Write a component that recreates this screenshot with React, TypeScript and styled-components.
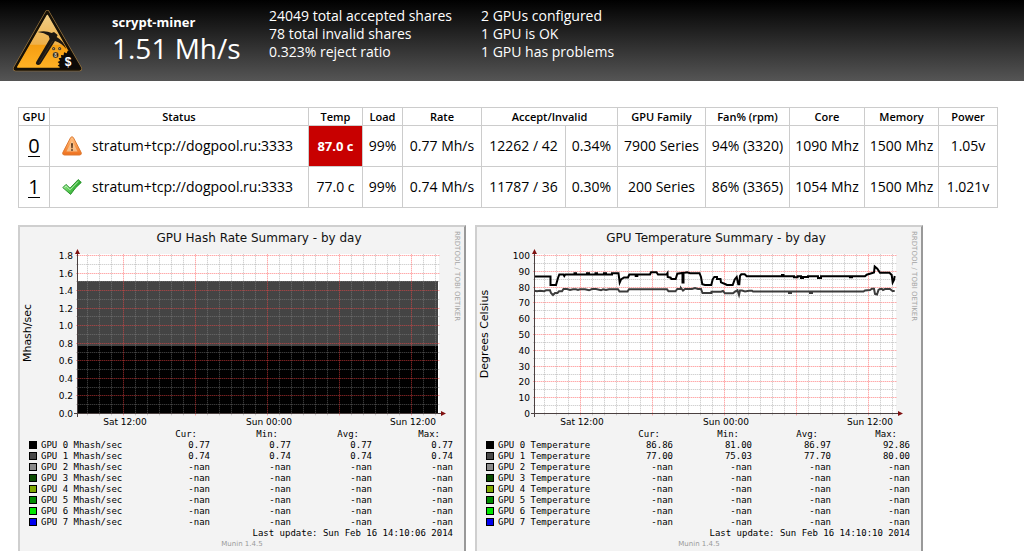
import React from "react";
import styled, { createGlobalStyle } from "styled-components";

const GlobalStyle = createGlobalStyle`
  html { scrollbar-width: none; }
  body {
    margin: 0;
    background: #fff;
    color: #000;
    font-family: "Trebuchet MS", "Open Sans", "Noto Sans", sans-serif;
    font-size: 14px;
  }
`;

const Header = styled.header`
  display: flex;
  align-items: flex-start;
  box-sizing: border-box;
  height: 81px;
  padding: 7px 12px 0;
  color: #fff;
  background: linear-gradient(#000, #555);
`;

const Logo = styled.svg`
  flex: none;
  width: 71px;
  height: 64px;
  margin-top: 2px;
`;

const Miner = styled.div`
  width: 157px;
  margin-left: 29px;
  padding-top: 5px;
  white-space: nowrap;
`;

const MinerName = styled.h1`
  margin: 0;
  font-size: 13px;
  line-height: 20px;
`;

const MinerRate = styled.div`
  font-size: 28px;
  line-height: 32px;
`;

const Stats = styled.ul`
  width: 212px;
  margin: 0;
  padding: 0;
  list-style: none;
  line-height: 18px;
  white-space: nowrap;
`;

const Main = styled.main`
  padding: 26px 26px 0 18px;
`;

const GpuTable = styled.table`
  width: 100%;
  table-layout: fixed;
  border-collapse: collapse;
  text-align: center;
  white-space: nowrap;
`;

const Col = styled.col<{ $w?: number }>`
  width: ${(p) => (p.$w ? `${p.$w}px` : "auto")};
`;

const Th = styled.th`
  height: 17px;
  padding: 0;
  border: 1px solid #ccc;
  font-size: 11px;
  font-weight: 600;
  line-height: 16px;
`;

const Td = styled.td<{ $hot?: boolean }>`
  height: 40px;
  padding: 0;
  border: 1px solid #ccc;
  line-height: 20px;
  ${(p) => p.$hot && "background: #c80000; color: #fff; font-weight: bold; font-size: 13px;"}
`;

const GpuLink = styled.a`
  display: inline-block;
  color: #000;
  font-size: 20px;
  line-height: 21px;
  text-decoration: none;
  border-bottom: 1px solid #000;
`;

const Status = styled.div`
  display: flex;
  align-items: center;
  gap: 10px;
  padding-left: 12px;
`;

const Charts = styled.div`
  display: flex;
  flex-wrap: wrap;
  gap: 9px;
  margin-top: 17px;
`;

const Panel = styled.section`
  box-sizing: border-box;
  flex: 0 1 448px;
  padding-bottom: 6px;
  background: #f3f3f3;
  border: 2px solid;
  border-color: #cfcfcf #999 #999 #cfcfcf;
`;

const Plot = styled.svg`
  display: block;
  width: 100%;
  font-family: "DejaVu Sans", sans-serif;
`;

const Legend = styled.table`
  width: 100%;
  table-layout: fixed;
  border-collapse: collapse;
  font-family: "DejaVu Sans Mono", monospace;
  font-size: 9px;
  line-height: 11px;
  white-space: pre;

  th, td { padding: 0 11px 0 0; font-weight: normal; text-align: right; }
  thead th { padding-right: 24px; }
  tbody th { padding-left: 9px; }
`;

const LegendName = styled.span`
  display: flex;
  justify-content: space-between;
`;

const Swatch = styled.span<{ $color: string }>`
  display: inline-block;
  box-sizing: border-box;
  width: 8px;
  height: 8px;
  margin-right: 4px;
  vertical-align: -1px;
  border: 1px solid #000;
  background: ${(p) => p.$color};
`;

const Updated = styled.p`
  margin: 0;
  padding-right: 11px;
  font: 9px/11px "DejaVu Sans Mono", monospace;
  text-align: right;
`;

const Version = styled.p`
  margin: 0;
  color: #999;
  font: 7px/11px "DejaVu Sans", sans-serif;
  text-align: center;
`;

function MinerLogo() {
  return (
    <Logo viewBox="35 28 213 192" role="img" aria-label="Miner logo">
      <defs>
        <linearGradient id="gold" x1="0" y1="0" x2="0" y2="1">
          <stop offset="0" stopColor="#f0cd85" />
          <stop offset="0.56" stopColor="#eeb04a" />
          <stop offset="0.58" stopColor="#f59e12" />
          <stop offset="1" stopColor="#ffb124" />
        </linearGradient>
      </defs>
      <path d="M141 38 L238 206 Q239 208 237 208 L46 208 Q44 208 45 206 Z" fill="#a07a40" stroke="#a07a40" strokeWidth="14" strokeLinejoin="round" />
      <path d="M141 38 L238 206 Q239 208 237 208 L46 208 Q44 208 45 206 Z" fill="#151007" stroke="#151007" strokeWidth="10" strokeLinejoin="round" />
      <path d="M141 47 L230 202 L52 202 Z" fill="url(#gold)" stroke="url(#gold)" strokeWidth="4" strokeLinejoin="round" />
      <path d="M112 97 Q137 92 154 100 L161 97 L172 106 L169 112 Q190 124 198 148 Q184 130 164 124 L121 192 Q114 199 108 194 Q105 191 108 186 L148 118 L145 108 Q132 99 112 97 Z" fill="#1c1712" />
      <path d="M116 190 L157 124" stroke="#4a3a22" strokeWidth="2" />
      <g fill="#2a2115" stroke="#e3b868">
        <circle cx="160" cy="147" r="5" />
        <circle cx="178" cy="147" r="5" />
        <circle cx="166" cy="166" r="9" />
      </g>
      <g fill="#d8b070">
        <circle cx="160" cy="147" r="1.8" />
        <circle cx="178" cy="147" r="1.8" />
      </g>
      <text x="166" y="171" fill="#f2dfb4" fontSize="14" fontWeight="bold" fontFamily="Liberation Sans, sans-serif" textAnchor="middle">8</text>
      <path d="M210 155 L242 207 L175 207 L179 202 L172 198 L178 193 L172 187 L179 183 L175 176 L183 174 L182 166 L190 167 L191 158 L199 161 L202 153 Z" fill="#0c0a08" />
      <text x="203" y="199" fill="#fff" fontSize="36" fontWeight="bold" fontFamily="Liberation Sans, sans-serif" textAnchor="middle">$</text>
    </Logo>
  );
}

function WarningIcon() {
  return (
    <svg width="20" height="20" viewBox="0 0 20 20" role="img" aria-label="Warning">
      <defs>
        <linearGradient id="warn" x1="0" y1="0" x2="0" y2="1">
          <stop offset="0" stopColor="#ffc68a" />
          <stop offset="0.5" stopColor="#fb9a4c" />
          <stop offset="1" stopColor="#ee6f1c" />
        </linearGradient>
      </defs>
      <path d="M8.6 1.6 Q10 -0.2 11.4 1.6 L19.2 16.6 Q19.8 19 17.6 19 H2.4 Q0.2 19 0.8 16.6 Z" fill="url(#warn)" stroke="#dc7a35" />
      <path d="M10 4.6 L15.6 15.6 H4.4 Z" fill="#f6d3a8" fillOpacity="0.7" />
      <path d="M9.1 7.3 H10.9 L10.6 12.2 H9.4 Z M9.2 13.2 H10.8 V14.8 H9.2 Z" fill="#4a2a12" />
    </svg>
  );
}

function OkIcon() {
  return (
    <svg width="20" height="20" viewBox="0 0 20 20" role="img" aria-label="OK">
      <defs>
        <linearGradient id="ok" x1="0" y1="0" x2="1" y2="0.4">
          <stop offset="0" stopColor="#b5efae" />
          <stop offset="0.45" stopColor="#63d15c" />
          <stop offset="1" stopColor="#1fa024" />
        </linearGradient>
      </defs>
      <path d="M0.8 10.6 L4 7.4 L8 11.2 L16.2 2.6 L19.3 5.4 Q13 10.5 8.6 17.4 Z" fill="url(#ok)" stroke="#2d9430" strokeLinejoin="round" />
      <path d="M2.6 10.4 L4.1 9 L8.1 12.8 L16.2 4.4" fill="none" stroke="#dcf8d8" strokeOpacity="0.7" />
    </svg>
  );
}

const gpus = [
  { id: 0, ok: false, temp: "87.0 c", cells: ["99%", "0.77 Mh/s", "12262 / 42", "0.34%", "7900 Series", "94% (3320)", "1090 Mhz", "1500 Mhz", "1.05v"] },
  { id: 1, ok: true, temp: "77.0 c", cells: ["99%", "0.74 Mh/s", "11787 / 36", "0.30%", "200 Series", "86% (3365)", "1054 Mhz", "1500 Mhz", "1.021v"] },
];

const swatches = ["#000", "#484848", "#8a8a8a", "#0a4a00", "#80a800", "#008a00", "#00e600", "#0000f0"];

const LEFT = 58;
const RIGHT = 419;
const TOP = 28;
const BOTTOM = 186;
const hours = Array.from({ length: 30 }, (_, i) => 68 + i * 12);
const isMajorHour = (x: number) => (x - 104) % 72 === 0;

// A faint solid line under a dotted one keeps the grid soft on white and on dark areas.
function GridLine({ d, major }: { d: string; major: boolean }) {
  return (
    <g stroke={major ? "#ff4848" : "#909090"}>
      <path d={d} strokeOpacity={major ? 0.2 : 0.14} />
      <path d={d} strokeOpacity={major ? 0.32 : 0.3} strokeDasharray="1 1" />
    </g>
  );
}

type PlotProps = {
  title: string;
  unit: string;
  unitY: number;
  labels: string[];
  under?: React.ReactNode;
  over?: React.ReactNode;
};

function TimePlot({ title, unit, unitY, labels, under, over }: PlotProps) {
  const steps = (labels.length - 1) * 2;
  const rowY = (i: number) => Math.round(BOTTOM - ((BOTTOM - TOP) * i) / steps) - 0.5;
  const rows = Array.from({ length: steps + 1 }, (_, i) => i);
  const minorRows = rows.filter((i) => i % 2 === 1);
  const majorRows = rows.filter((i) => i % 2 === 0);
  const rowPath = (i: number) => `M${LEFT - 2} ${rowY(i)} H${RIGHT + 1}`;
  const hourPath = (x: number) => `M${x - 0.5} 26 V188`;
  return (
    <Plot viewBox="0 -1 444 202" role="img" aria-label={title}>
      <text x="239" y="14" fontSize="12" textAnchor="middle" fill="#111">{title}</text>
      <text transform="translate(435 3) rotate(90)" fontSize="7" fill="#a4a4a4">RRDTOOL / TOBI OETIKER</text>
      <text transform={`translate(11 ${unitY}) rotate(-90)`} fontSize="11" textAnchor="middle">{unit}</text>
      <rect x={LEFT} y="26" width={RIGHT - LEFT} height={BOTTOM - 26} fill="#fff" />
      {under}
      {minorRows.map((i) => <GridLine key={i} d={rowPath(i)} major={false} />)}
      {hours.filter((x) => !isMajorHour(x)).map((x) => <GridLine key={x} d={hourPath(x)} major={false} />)}
      {majorRows.map((i) => <GridLine key={i} d={rowPath(i)} major />)}
      {hours.filter(isMajorHour).map((x) => <GridLine key={x} d={hourPath(x)} major />)}
      {over}
      <path d={`M54 ${BOTTOM - 0.5} H423 M${LEFT - 0.5} 24 V189`} stroke="#4a4040" fill="none" />
      <path d="M55 26 L57.5 21 L60 26 Z M421 183 L426 185.5 L421 188 Z" fill="#801010" />
      {labels.map((label, i) => (
        <text key={label} x="53" y={rowY(i * 2) + 3.5} fontSize="9" textAnchor="end">{label}</text>
      ))}
      {["Sat 12:00", "Sun 00:00", "Sun 12:00"].map((label, i) => (
        <text key={label} x={105 + i * 144} y="197" fontSize="9" textAnchor="middle">{label}</text>
      ))}
    </Plot>
  );
}

type LegendProps = { name: string; numberWidth: number; rows: string[][]; updated: string };

function PlotLegend({ name, numberWidth, rows, updated }: LegendProps) {
  return (
    <>
      <Legend>
        <colgroup>
          <Col />
          <Col $w={numberWidth} />
          <Col $w={numberWidth} />
          <Col $w={numberWidth} />
        </colgroup>
        <thead>
          <tr><th>Cur:</th><th>Min:</th><th>Avg:</th><th>Max:</th></tr>
        </thead>
        <tbody>
          {swatches.map((color, i) => {
            const [cur, min, avg, max] = rows[i] ?? ["-nan", "-nan", "-nan", "-nan"];
            return (
              <tr key={color}>
                <th scope="row">
                  <LegendName>
                    <span><Swatch $color={color} />{`GPU ${i} ${name}`}</span>
                    <span>{cur}</span>
                  </LegendName>
                </th>
                <td>{min}</td>
                <td>{avg}</td>
                <td>{max}</td>
              </tr>
            );
          })}
        </tbody>
      </Legend>
      <Updated>{`Last update: ${updated}`}</Updated>
      <Version>Munin 1.4.5</Version>
    </>
  );
}

const temp0 =
  "M57.5 48.5 H73.5 V57 H79 L81 50 L82.3 46.5 H86.5 L87.3 48 L88.3 46.5 H97.5 V45.3 H99 V46.5 H110 V45.3 H112 V46.5 H118.5 V45.3 H120 V46.5 H127 V45.3 H129 V46.5 H135 V45.3 H141.5 L142.7 54.5 L144 51.5 L147 49.5 H151 L152.3 46.5 H158.7 V48 H160.3 V46.5 H173 L174 44.3 H179.5 L181 46.5 H189.5 L190.5 45 L190.7 49 L193.7 49.7 L194.3 51 H198.7 L200.3 45.7 L205.5 45 V54.5 H206.5 V45 L210 44.3 L213 45.2 H222.5 L224 49 L225.3 56.3 L228 57 H234.3 L235.7 51.3 L237.3 49 H240 V51 H243.5 L244 54.3 L248 56 L250 57 H255.7 L257.7 51.5 L259.7 49 L261.3 56.3 H262.3 L263 48 L264.3 46.3 H267.7 L269.7 48.3 H305 V47 H306.5 V48.3 H317 V49.3 H320.5 V48.3 H324 V50 H326 V49 H331 V48.3 H341 V50 H344 V48.3 H373 V49.3 H375 V48.3 H388 L389.7 46.7 L393.7 45.5 L397 44.5 L397.7 38.5 L400.3 40.7 L403 44.7 H412.5 L414.7 47 L415.7 54.5 L417 52 L417.7 48";
const temp1 =
  "M57.5 62.7 L60 63.3 L63 62.7 L67 63.3 L69 62.3 H73 L74 65 L76 67 L78 65 H80.5 L82 63.3 H85 L86.5 61 H90 L93 62 L96 61.3 H99 L101 62 L103 61.3 H108 L112 62.3 L115 61 H119 L124 62.3 L126 61.3 L129 62 L132 61.3 H141 L142.5 63.5 H150.5 L152 61.3 H190 L191.5 63.3 H198.5 L200.3 61 H204 V60 L206 62.5 L208 61 H215 L218 60 L221 61 H224 L225.5 65 H234.5 V63.7 H244 L246 63 L248 65.3 H256 L258 63.7 L260.5 62.3 L262 67 L263 62.5 H265 L268 63.5 L272 62.7 H275 L276 63.5 H312 V65 H314 V63.5 H333 V65 H335 V63.5 H386.5 L388 62.5 L393 62 L395 60.7 H397 L398 66 L400 66.5 L401.5 62 L403 61 H405 L406 62 L408 61 H413 L415.5 63 H417.7";

export default function App() {
  return (
    <>
      <GlobalStyle />
      <Header>
        <MinerLogo />
        <Miner>
          <MinerName>scrypt-miner</MinerName>
          <MinerRate>1.51 Mh/s</MinerRate>
        </Miner>
        <Stats>
          <li>24049 total accepted shares</li>
          <li>78 total invalid shares</li>
          <li>0.323% reject ratio</li>
        </Stats>
        <Stats>
          <li>2 GPUs configured</li>
          <li>1 GPU is OK</li>
          <li>1 GPU has problems</li>
        </Stats>
      </Header>
      <Main>
        <GpuTable>
          <colgroup>
            <Col $w={31} /><Col /><Col $w={54} /><Col $w={40} /><Col $w={79} /><Col $w={84} /><Col $w={52} />
            <Col $w={88} /><Col $w={84} /><Col $w={75} /><Col $w={74} /><Col $w={59} />
          </colgroup>
          <thead>
            <tr>
              <Th>GPU</Th><Th>Status</Th><Th>Temp</Th><Th>Load</Th><Th>Rate</Th><Th colSpan={2}>Accept/Invalid</Th>
              <Th>GPU Family</Th><Th>Fan% (rpm)</Th><Th>Core</Th><Th>Memory</Th><Th>Power</Th>
            </tr>
          </thead>
          <tbody>
            {gpus.map((gpu) => (
              <tr key={gpu.id}>
                <Td><GpuLink href={`#gpu-${gpu.id}`}>{gpu.id}</GpuLink></Td>
                <Td>
                  <Status>
                    {gpu.ok ? <OkIcon /> : <WarningIcon />}
                    <span>stratum+tcp://dogpool.ru:3333</span>
                  </Status>
                </Td>
                <Td $hot={!gpu.ok}>{gpu.temp}</Td>
                {gpu.cells.map((cell, i) => <Td key={i}>{cell}</Td>)}
              </tr>
            ))}
          </tbody>
        </GpuTable>
        <Charts>
          <Panel>
            <TimePlot
              title="GPU Hash Rate Summary - by day"
              unit="Mhash/sec"
              unitY={105}
              labels={["0.0", "0.2", "0.4", "0.6", "0.8", "1.0", "1.2", "1.4", "1.6", "1.8"]}
              under={
                <>
                  <rect x="58" y="53" width="360" height="65" fill="#444" />
                  <rect x="58" y="118" width="360" height="68" fill="#000" />
                </>
              }
            />
            <PlotLegend
              name="Mhash/sec"
              numberWidth={81}
              rows={[["0.77", "0.77", "0.77", "0.77"], ["0.74", "0.74", "0.74", "0.74"]]}
              updated="Sun Feb 16 14:10:06 2014"
            />
          </Panel>
          <Panel>
            <TimePlot
              title="GPU Temperature Summary - by day"
              unit="Degrees Celsius"
              unitY={106}
              labels={["0", "10", "20", "30", "40", "50", "60", "70", "80", "90", "100"]}
              over={
                <g fill="none" strokeWidth="2">
                  <path d={temp1} stroke="#3c3c3c" />
                  <path d={temp0} stroke="#000" />
                </g>
              }
            />
            <PlotLegend
              name="Temperature"
              numberWidth={79}
              rows={[["86.86", "81.00", "86.97", "92.86"], ["77.00", "75.03", "77.70", "80.00"]]}
              updated="Sun Feb 16 14:10:10 2014"
            />
          </Panel>
        </Charts>
      </Main>
    </>
  );
}
